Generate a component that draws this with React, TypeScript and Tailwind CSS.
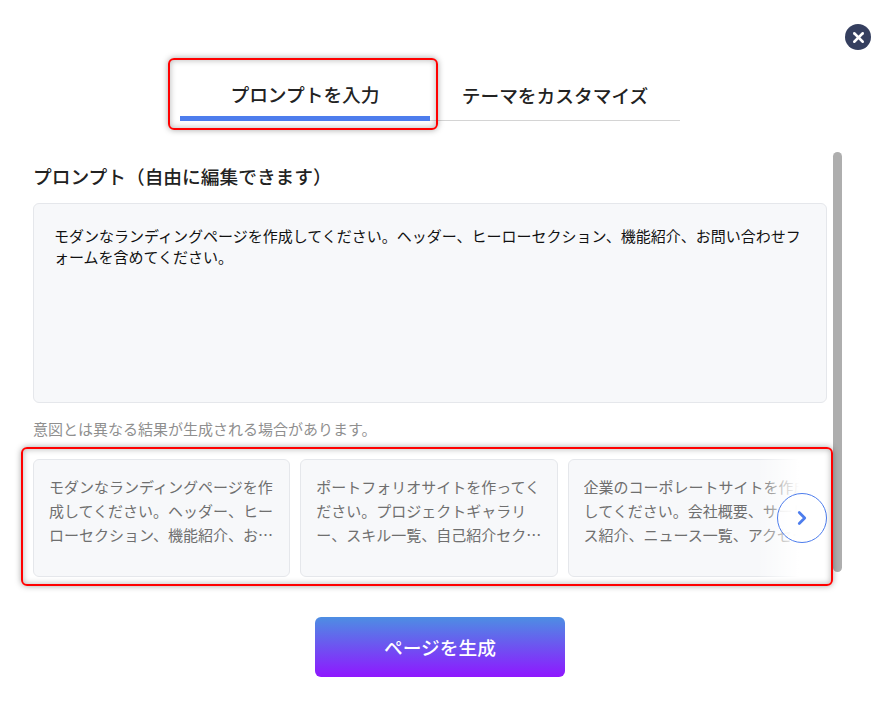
import { ChevronRight, X } from "lucide-react";

const cards = [
  "モダンなランディングページを作成してください。ヘッダー、ヒーローセクション、機能紹介、お問い合わせフォームを含めてください。",
  "ポートフォリオサイトを作ってください。プロジェクトギャラリー、スキル一覧、自己紹介セクション、連絡先を含めてください。",
  "企業のコーポレートサイトを作成してください。会社概要、サービス紹介、ニュース一覧、アクセス情報を含めてください。",
];

export default function App() {
  return (
    <div
      className="relative h-[702px] w-[891px] overflow-hidden bg-white text-[#222]"
      style={{ fontFamily: '"Noto Sans CJK JP", "Noto Sans", sans-serif' }}
    >
      <button className="absolute left-[845px] top-[24px] flex h-[26px] w-[26px] items-center justify-center rounded-full bg-[#353f5f] text-white">
        <X size={17} strokeWidth={3.5} />
      </button>

      <div className="flex justify-center pr-[31px] pt-[71px]">
        <div className="flex w-[500px] border-b border-[#d4d4d4]">
          <div className="-mb-px flex h-[50px] w-[250px] items-center justify-center border-b-[5px] border-[#4d7ded] pt-[2px] text-[18.72px] font-medium">
            プロンプトを入力
          </div>
          <div className="flex h-[49px] w-[250px] items-center justify-center text-[18.72px] font-medium">
            テーマをカスタマイズ
          </div>
        </div>
      </div>

      <div className="px-[33px] pr-[64px] pt-[42px]">
        <h2 className="text-[18.72px] font-medium leading-[26px]">プロンプト（自由に編集できます）</h2>
        <div className="mt-[14px] h-[200px] rounded-md border border-[#e5e7eb] bg-[#f7f8fa] px-[20px] py-[21px] text-[15px] leading-[21px] text-[#111]">
          モダンなランディングページを作成してください。ヘッダー、ヒーローセクション、機能紹介、お問い合わせフォームを含めてください。
        </div>
        <p className="mt-[15px] text-[15px] leading-[22px] text-[#8f8f8f]">
          意図とは異なる結果が生成される場合があります。
        </p>
        <div className="relative mt-[19px] flex h-[118px] gap-[10px] overflow-hidden">
          {cards.map((c) => (
            <div
              key={c}
              className="h-[118px] w-[257.3px] shrink-0 rounded-md border border-[#e5e7eb] bg-[#f7f8fa] px-[15px] pt-[15px] text-[15px] leading-[24px] text-[#6f6f6f]"
            >
              <p className="line-clamp-3">{c}</p>
            </div>
          ))}
          <div className="absolute bottom-0 right-0 top-0 w-[70px] bg-linear-to-r/srgb from-white/0 via-white via-60% to-white" />
          <button className="absolute right-0 top-[34px] flex h-[50px] w-[50px] items-center justify-center rounded-full border border-[#4d7ded] bg-white/80 text-[#4d7ded]">
            <ChevronRight size={22} strokeWidth={3} />
          </button>
        </div>
      </div>

      <div className="flex justify-center pr-[11px] pt-[40px]">
        <button className="h-[60px] w-[250px] rounded-md bg-linear-to-b/srgb from-[#4d8ee3] to-[#8f17ff] text-[18.72px] font-medium text-white">
          ページを生成
        </button>
      </div>

      <div className="absolute left-[833px] top-[152px] h-[420px] w-[9px] rounded-full bg-[#aeaeae]" />
      <div className="pointer-events-none absolute left-[168px] top-[58px] h-[72px] w-[270px] rounded-md border-2 border-[#ff0000] shadow-[0_0_6px_rgba(0,0,0,0.35),inset_0_0_6px_rgba(0,0,0,0.3)]" />
      <div className="pointer-events-none absolute left-[21px] top-[447px] h-[139px] w-[812px] rounded-md border-2 border-[#ff0000] shadow-[0_0_6px_rgba(0,0,0,0.35),inset_0_0_6px_rgba(0,0,0,0.3)]" />
    </div>
  );
}
